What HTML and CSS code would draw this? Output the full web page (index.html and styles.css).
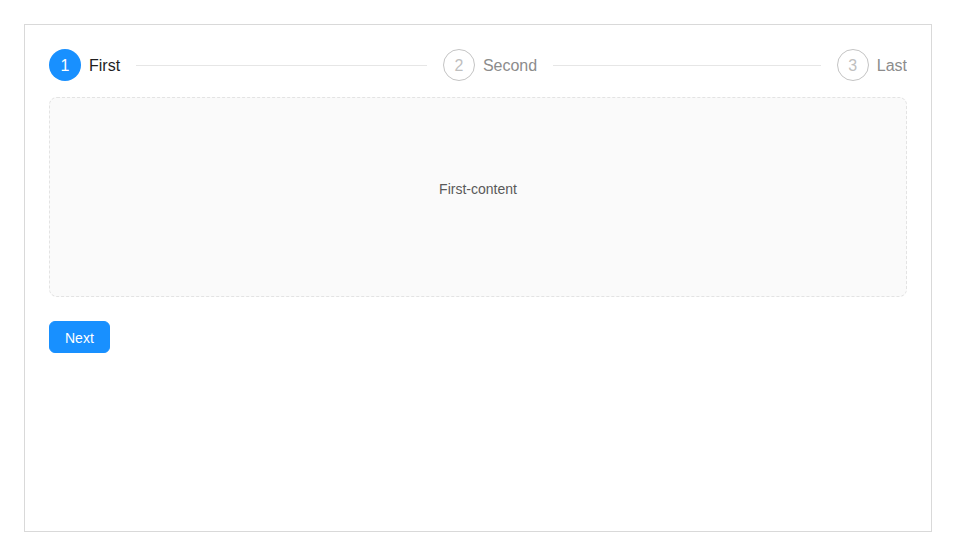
FILE: index.html
```html
<!DOCTYPE html>
<html>
<head>
<meta charset="utf-8">
<link rel="stylesheet" href="styles.css">
</head>
<body>
<div class="frame">
  <div class="steps">
    <div class="step step-active">
      <span class="step-icon">1</span>
      <span class="step-title">First</span>
    </div>
    <div class="step step-wait">
      <span class="step-icon">2</span>
      <span class="step-title">Second</span>
    </div>
    <div class="step step-wait step-last">
      <span class="step-icon">3</span>
      <span class="step-title">Last</span>
    </div>
  </div>
  <div class="steps-content">First-content</div>
  <div class="actions">
    <button class="btn-primary">Next</button>
  </div>
</div>
</body>
</html>
```

FILE: styles.css
```css
html, body {
  margin: 0;
  padding: 0;
  background: #ffffff;
}
body {
  padding: 24px;
  box-sizing: border-box;
  height: 556px;
  font-family: "Liberation Sans", Arial, sans-serif;
}
.frame {
  box-sizing: border-box;
  height: 508px;
  border: 1px solid #d9d9d9;
  padding: 24px;
}
.steps {
  display: flex;
  height: 32px;
}
.step {
  flex: 1;
  display: flex;
  align-items: flex-start;
  overflow: hidden;
  white-space: nowrap;
}
.step + .step {
  padding-left: 16px;
}
.step-last {
  flex: none;
}
.step-icon {
  flex: none;
  box-sizing: border-box;
  width: 32px;
  height: 32px;
  padding-top: 1px;
  border-radius: 50%;
  margin-right: 8px;
  display: flex;
  align-items: center;
  justify-content: center;
  font-size: 16px;
}
.step-title {
  position: relative;
  font-size: 16px;
  line-height: 32px;
  padding-top: 1px;
  padding-right: 16px;
}
.step-title::after {
  content: "";
  position: absolute;
  top: 16px;
  left: 100%;
  width: 9999px;
  height: 1px;
  background: #e6e6e6;
}
.step-last .step-title {
  padding-right: 0;
}
.step-last .step-title::after {
  display: none;
}
.step-active .step-icon {
  background: #1890ff;
  color: #ffffff;
}
.step-active .step-title {
  color: #1f1f1f;
}
.step-wait .step-icon {
  border: 1px solid #c4c4c4;
  color: #bfbfbf;
}
.step-wait .step-title {
  color: #8c8c8c;
}
.steps-content {
  box-sizing: border-box;
  margin-top: 16px;
  height: 200px;
  background: #fafafa;
  border: 1px dashed #e3e3e3;
  border-radius: 8px;
  text-align: center;
  line-height: 182px;
  font-size: 14px;
  color: #595959;
}
.actions {
  margin-top: 24px;
}
.btn-primary {
  font-family: "Liberation Sans", Arial, sans-serif;
  font-size: 14px;
  line-height: 22px;
  padding: 5px 15px 3px;
  border: 1px solid #1890ff;
  background: #1890ff;
  color: #ffffff;
  border-radius: 6px;
  cursor: pointer;
}
```
